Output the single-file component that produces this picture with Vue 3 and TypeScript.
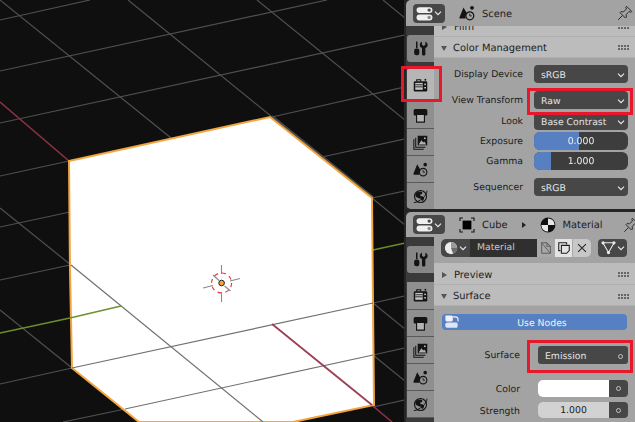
<script setup lang="ts">
type Seg = [number, number, number, number]

const bgLines: Seg[] = [
  [0, 0, 171, 138],
  [128, 0, 372, 198],
  [257, 0, 405, 120],
  [383, 0, 405, 18],
  [0, 208, 71, 265],
  [0, 310, 72, 368],
  [372, 198, 405, 225],
  [373, 303, 405, 329],
  [373, 355, 405, 381],
  [0, 20, 90, 0],
  [0, 71, 327, 0],
  [0, 123, 405, 35],
  [272, 117, 405, 87],
  [0, 176, 69, 161],
  [322, 157, 405, 139],
  [372, 198, 405, 191],
  [0, 227, 70, 212],
  [0, 280, 70, 265],
  [0, 384, 72, 368],
  [373, 303, 405, 296],
  [373, 355, 405, 348],
  [373, 407, 405, 400],
  [63, 422, 125, 409],
]
const bgRed: Seg[] = [
  [0, 102, 69, 161],
  [373, 406, 392, 422],
]
const bgGreen: Seg[] = [
  [0, 333, 70, 318],
  [373, 250, 405, 243],
]
const cubeLines: Seg[] = [
  [71, 265, 263, 422],
  [72, 368, 373, 303],
  [125, 409, 373, 355],
]

const cubeEdge = '69,161 270,117 372,198 373,303 374,405 293,422 139,422 72,368 70,270'
const tabs = ['i-render', 'i-output', 'i-image', 'i-scene', 'i-world']
</script>

<template>
  <div class="screen">
    <!-- icon sheet -->
    <svg class="defs" width="0" height="0" aria-hidden="true">
      <symbol id="i-editor" viewBox="0 0 16 16">
        <rect x="0.5" y="2" width="15" height="5.6" rx="2.8" fill="#f0f0f0" />
        <circle cx="12.4" cy="4.8" r="1.6" fill="#4a4a4a" />
        <rect x="0.5" y="9" width="15" height="5.6" rx="2.8" fill="#f0f0f0" />
        <circle cx="12.4" cy="11.8" r="1.6" fill="#8a8a8a" />
      </symbol>
      <symbol id="i-scene" viewBox="0 0 16 16">
        <path d="M4.5 2.5 L8 8.5 A6 6 0 0 0 6.5 13.5 H1 C0.4 13.5 0.3 12.8 0.6 12 Z" fill="#141414" />
        <circle cx="13" cy="2.8" r="1.9" fill="#141414" />
        <circle cx="10.8" cy="10.8" r="4" fill="none" stroke="#141414" stroke-width="1.2" />
        <path d="M10.8 8.6 V10.9 H12.8" fill="none" stroke="#141414" stroke-width="0.9" />
      </symbol>
      <symbol id="i-pin" viewBox="0 0 16 16">
        <path d="M9.5 1.2 L14.8 6.5 L13.4 7.2 L12 6.4 L9.2 9.6 L9.4 12 L8.4 13 L3 7.6 L4 6.6 L6.4 6.8 L9.6 4 L8.8 2.6 Z M5.4 10.6 L1.2 14.8" fill="none" stroke="#2a2a2a" stroke-width="1" stroke-linejoin="round" />
      </symbol>
      <symbol id="i-tool" viewBox="0 0 16 16">
        <rect x="3.2" y="0.6" width="1.6" height="7" fill="#141414" />
        <rect x="1.2" y="8" width="5.6" height="7.2" rx="2.4" fill="#141414" />
        <path d="M9.6 0.8 V4 L11.4 5.2 L13.2 4 V0.8 C14.8 1.4 15.6 2.8 15.6 4.2 C15.6 5.8 14.6 7 13.2 7.5 V14 C13.2 14.9 12.4 15.4 11.4 15.4 C10.4 15.4 9.6 14.9 9.6 14 V7.5 C8.2 7 7.2 5.8 7.2 4.2 C7.2 2.8 8 1.4 9.6 0.8 Z" fill="#141414" />
      </symbol>
      <symbol id="i-render" viewBox="0 0 16 16">
        <path d="M4 3.6 V1.8 H8.2 V3.6" fill="none" stroke="#141414" stroke-width="1.2" />
        <circle cx="13.2" cy="1.9" r="1" fill="#141414" />
        <rect x="0.8" y="3.4" width="14.4" height="11" rx="1.4" fill="#141414" />
        <rect x="2.4" y="5.2" width="8" height="7.4" fill="#c4c4c4" />
        <path d="M2.4 7.2 H10.4 M2.4 9.4 H10.4" stroke="#141414" stroke-width="0.9" />
        <rect x="12" y="6" width="1.8" height="1.6" fill="#c4c4c4" />
        <rect x="12" y="9.6" width="1.8" height="1.6" fill="#c4c4c4" />
      </symbol>
      <symbol id="i-output" viewBox="0 0 16 16">
        <path d="M2.5 1 H13.5 C14.6 1 15.3 1.8 15.3 3 V6.6 C15.3 7.6 14.8 8 14 8 H2 C1.2 8 0.7 7.6 0.7 6.6 V3 C0.7 1.8 1.4 1 2.5 1 Z" fill="#141414" />
        <path d="M3.8 7.5 V15 H12.2 V7.5" fill="#b4b4b4" stroke="#141414" stroke-width="1.2" />
      </symbol>
      <symbol id="i-image" viewBox="0 0 16 16">
        <path d="M0.9 4.5 V15.1 H11.5 M2.9 2.8 V13.1 H13.2" fill="none" stroke="#141414" stroke-width="1.1" />
        <rect x="5" y="0.8" width="10.2" height="10.2" fill="#141414" />
        <path d="M6 10 L9 5.6 L10.8 8 L12 6.8 L14.2 10 Z" fill="#b0b0b0" />
        <circle cx="12.6" cy="3.4" r="1" fill="#b0b0b0" />
      </symbol>
      <symbol id="i-world" viewBox="0 0 16 16">
        <circle cx="8" cy="8" r="6.4" fill="none" stroke="#141414" stroke-width="1.2" />
        <path d="M4 3.8 C6 2.4 9 2.4 10 3.6 C10.4 5 8.6 5.4 7.6 6.2 C7 7.4 8.6 7.6 10.6 8 C12.6 8.8 12 11 10.6 12.4 C9.4 13 8.6 11.6 8.2 10.2 C6.6 9.8 4.4 9.6 2.6 7.6 C2.4 6 3 4.8 4 3.8 Z" fill="#141414" />
        <path d="M0.8 14.2 C2.4 15 5 13.6 9 11 C12.2 8.8 15.4 4 14.8 1.6" fill="none" stroke="#141414" stroke-width="1" />
      </symbol>
      <symbol id="i-object" viewBox="0 0 16 16">
        <path d="M1 4 V1 H4 M12 1 H15 V4 M15 12 V15 H12 M4 15 H1 V12" fill="none" stroke="#141414" stroke-width="1.1" />
        <rect x="3.6" y="3.6" width="8.8" height="8.8" fill="#000" />
      </symbol>
      <symbol id="i-material" viewBox="0 0 16 16">
        <circle cx="8" cy="8" r="7.4" fill="#111" />
        <path d="M8 1.4 A6.6 6.6 0 0 1 14.6 8 H8 Z" fill="#e8e8e8" />
        <path d="M8 8 H1.4 A6.6 6.6 0 0 0 8 14.6 Z" fill="#e8e8e8" />
      </symbol>
      <symbol id="i-ball" viewBox="0 0 16 16">
        <circle cx="8" cy="8" r="7" fill="#ececec" />
        <path d="M8 1 A7 7 0 0 1 15 8 H8 Z" fill="#9a9a9a" />
        <path d="M8 8 H15 A7 7 0 0 1 10.5 14.5 Z" fill="#6c6c6c" />
      </symbol>
      <symbol id="i-nodes" viewBox="0 0 16 16">
        <path d="M2 3 H14 L8 13.4 Z" fill="none" stroke="#ececec" stroke-width="1.1" />
        <circle cx="2.2" cy="3" r="1.7" fill="#ececec" />
        <circle cx="13.8" cy="3" r="1.7" fill="#ececec" />
        <circle cx="8" cy="13.4" r="1.7" fill="#ececec" />
      </symbol>
      <symbol id="i-chevron" viewBox="0 0 8 8">
        <path d="M1 2.6 L4 5.6 L7 2.6" fill="none" stroke="#e8e8e8" stroke-width="1.2" />
      </symbol>
      <symbol id="i-fake" viewBox="0 0 16 16">
        <path d="M3 2 H9 L13 6 V14 H3 Z M3 2 L13 14 M9 2 V6 H13" fill="none" stroke="#555" stroke-width="1" />
      </symbol>
      <symbol id="i-copy" viewBox="0 0 16 16">
        <path d="M4 11 H2 V2 H11 V4" fill="none" stroke="#1c1c1c" stroke-width="1.2" />
        <path d="M5 5 H14 V11 L11 14 H5 Z" fill="none" stroke="#1c1c1c" stroke-width="1.2" />
      </symbol>
      <symbol id="i-close" viewBox="0 0 16 16">
        <path d="M3.5 3.5 L12.5 12.5 M12.5 3.5 L3.5 12.5" fill="none" stroke="#2a2a2a" stroke-width="1.3" />
      </symbol>
      <symbol id="i-nodetree" viewBox="0 0 16 16">
        <path d="M1.5 1.5 H8 C9.4 1.5 9.4 3 9.4 4 V6.5 C9.4 8 8 8 7 8 H4 C2.5 8 1.5 7.5 1.5 6 Z" fill="#f2f2f2" />
        <path d="M5 9 H13 C14.2 9 14.5 10 14.5 11 V13 C14.5 14.2 13.6 14.6 12.6 14.6 H3 C1.8 14.6 1.4 13.6 1.4 12.6 V11 C1.4 9.6 3 9 5 9 Z" fill="#dfe6f3" />
        <path d="M9.4 3 H12 C14.4 3 15 4.6 15 6 V8" fill="none" stroke="#f2f2f2" stroke-width="1.2" />
      </symbol>
    </svg>

    <!-- 3D viewport -->
    <svg class="viewport" width="404" height="422" viewBox="0 0 404 422">
      <line v-for="(l, i) in bgLines" :key="'g' + i" :x1="l[0]" :y1="l[1]" :x2="l[2]" :y2="l[3]" stroke="#505050" stroke-width="1.2" />
      <line v-for="(l, i) in bgRed" :key="'r' + i" :x1="l[0]" :y1="l[1]" :x2="l[2]" :y2="l[3]" stroke="#8c3243" stroke-width="1.6" />
      <line v-for="(l, i) in bgGreen" :key="'v' + i" :x1="l[0]" :y1="l[1]" :x2="l[2]" :y2="l[3]" stroke="#6b8f2b" stroke-width="1.6" />
      <line x1="272" y1="116" x2="373" y2="197" stroke="#4a4a4a" stroke-width="2" />
      <polygon :points="cubeEdge" fill="#fff" stroke="#f3a63f" stroke-width="2" />
      <line v-for="(l, i) in cubeLines" :key="'c' + i" :x1="l[0]" :y1="l[1]" :x2="l[2]" :y2="l[3]" stroke="#707070" stroke-width="1.2" />
      <line x1="70" y1="318" x2="121" y2="306" stroke="#6d9130" stroke-width="1.6" />
      <line x1="272" y1="324" x2="372" y2="405" stroke="#9b4053" stroke-width="1.8" />
      <!-- 3D cursor -->
      <circle cx="221.6" cy="283" r="10" fill="none" stroke="#f03838" stroke-width="1.2" stroke-dasharray="4 3.85" />
      <path d="M221.5 265 V274 M221.5 292 V302 M203 288 L213 285.5 M230 281 L240 278.5 M213 275 L219 280.5 M224.5 286 L230.5 291" stroke="#8a8a8a" stroke-width="1.1" fill="none" />
      <circle cx="221.6" cy="283" r="2.8" fill="#f5a63b" stroke="#222" stroke-width="1" />
    </svg>

    <div class="editors">
      <!-- Scene: render properties -->
      <section class="editor top">
        <header class="bar">
          <button class="type-btn">
            <svg class="ico"><use href="#i-editor" /></svg>
            <svg class="chev"><use href="#i-chevron" /></svg>
          </button>
          <svg class="ico crumb-ico"><use href="#i-scene" /></svg>
          <span class="crumb">Scene</span>
          <svg class="ico pin"><use href="#i-pin" /></svg>
        </header>
        <div class="body">
          <nav class="tabs">
            <div class="tab tool"><svg class="ico"><use href="#i-tool" /></svg></div>
            <div
              v-for="(t, i) in tabs"
              :key="t"
              class="tab"
              :class="{ active: i === 0 }"
            >
              <svg class="ico"><use :href="'#' + t" /></svg>
            </div>
          </nav>
          <div class="main">
            <div class="head film">
              <span class="tri right"></span>Film<span class="grip"></span>
            </div>
            <div class="head cm">
              <span class="tri"></span>Color Management<span class="grip"></span>
            </div>
            <div class="rows">
              <div class="row">
                <label>Display Device</label>
                <div class="select">sRGB<svg class="chev"><use href="#i-chevron" /></svg></div>
              </div>
              <div class="row far">
                <label>View Transform</label>
                <div class="select">Raw<svg class="chev"><use href="#i-chevron" /></svg></div>
              </div>
              <div class="row near">
                <label>Look</label>
                <div class="select">Base Contrast<svg class="chev"><use href="#i-chevron" /></svg></div>
              </div>
              <div class="row close">
                <label>Exposure</label>
                <div class="slider"><i :style="{ width: '48%' }"></i><span>0.000</span></div>
              </div>
              <div class="row close">
                <label>Gamma</label>
                <div class="slider"><i :style="{ width: '18%' }"></i><span>1.000</span></div>
              </div>
              <div class="row far">
                <label>Sequencer</label>
                <div class="select">sRGB<svg class="chev"><use href="#i-chevron" /></svg></div>
              </div>
            </div>
          </div>
        </div>
      </section>

      <!-- Cube: material properties -->
      <section class="editor bottom">
        <header class="bar">
          <button class="type-btn">
            <svg class="ico"><use href="#i-editor" /></svg>
            <svg class="chev"><use href="#i-chevron" /></svg>
          </button>
          <svg class="ico crumb-ico"><use href="#i-object" /></svg>
          <span class="crumb">Cube</span>
          <span class="sep-tri"></span>
          <svg class="ico mat-ico"><use href="#i-material" /></svg>
          <span class="crumb">Material</span>
          <svg class="ico pin"><use href="#i-pin" /></svg>
        </header>
        <div class="body">
          <nav class="tabs">
            <div class="tab tool"><svg class="ico"><use href="#i-tool" /></svg></div>
            <div v-for="t in tabs" :key="t" class="tab">
              <svg class="ico"><use :href="'#' + t" /></svg>
            </div>
          </nav>
          <div class="main">
            <div class="slot-row">
              <button class="mat-btn">
                <svg class="ico"><use href="#i-ball" /></svg>
                <svg class="chev"><use href="#i-chevron" /></svg>
              </button>
              <div class="mat-name">Material</div>
              <button class="mini off"><svg class="ico sm"><use href="#i-fake" /></svg></button>
              <button class="mini on"><svg class="ico sm"><use href="#i-copy" /></svg></button>
              <button class="mini"><svg class="ico sm"><use href="#i-close" /></svg></button>
              <button class="node-btn">
                <svg class="ico"><use href="#i-nodes" /></svg>
                <svg class="chev"><use href="#i-chevron" /></svg>
              </button>
            </div>
            <div class="head preview">
              <span class="tri right"></span>Preview<span class="grip"></span>
            </div>
            <div class="head surface">
              <span class="tri"></span>Surface<span class="grip"></span>
            </div>
            <div class="rows lower">
              <button class="use-nodes">
                <svg class="ico nodes"><use href="#i-nodetree" /></svg>
                Use Nodes
              </button>
              <div class="row surf">
                <label>Surface</label>
                <div class="select emission">Emission<span class="socket"></span></div>
              </div>
              <div class="row color">
                <label>Color</label>
                <div class="swatch"></div>
                <div class="sock-btn"><span class="socket"></span></div>
              </div>
              <div class="row strength">
                <label>Strength</label>
                <div class="number">1.000</div>
                <div class="sock-btn"><span class="socket"></span></div>
              </div>
            </div>
          </div>
        </div>
      </section>
    </div>

    <!-- red annotation boxes -->
    <div class="mark m-tab"></div>
    <div class="mark m-raw"></div>
    <div class="mark m-emission"></div>
  </div>
</template>

<style>
html,
body {
  margin: 0;
  background: #1f1f1f;
  overflow: hidden;
}
</style>

<style scoped>
.screen {
  position: relative;
  display: flex;
  width: 635px;
  height: 422px;
  overflow: hidden;
  background: #262626;
  font-family: 'DejaVu Sans', sans-serif;
  font-size: 9.3px;
  color: #1c1c1c;
  text-rendering: geometricPrecision;
}

.defs {
  position: absolute;
}

.viewport {
  flex: none;
  display: block;
  background: #0f0f0f;
  filter: blur(0.25px);
}

.ico {
  display: block;
  width: 16px;
  height: 16px;
  flex: none;
}

.ico.sm {
  width: 14px;
  height: 14px;
}

.chev {
  display: block;
  width: 8px;
  height: 8px;
  flex: none;
}

/* ── Editors ───────────────────────────────────────────── */
.editors {
  flex: 1;
  display: flex;
  flex-direction: column;
  gap: 3px;
  padding-left: 2px;
  min-width: 0;
  filter: blur(0.3px);
}

.editor {
  display: flex;
  flex-direction: column;
  overflow: hidden;
  background: #3a3a3a;
  border-radius: 5px 0 0 5px;
}

.editor.top {
  height: 209px;
}

.editor.bottom {
  height: 210px;
  border-radius: 5px 0 0 0;
}

.bar {
  flex: none;
  display: flex;
  align-items: center;
  height: 26px;
  padding-left: 7px;
  background: #a3a3a3;
}

.bottom .bar {
  height: 25px;
}

.type-btn,
.mat-btn,
.node-btn {
  display: flex;
  align-items: center;
  justify-content: center;
  gap: 1px;
  padding: 0;
  border: 0;
  background: #474747;
}

.type-btn {
  width: 32px;
  height: 19px;
  border-radius: 4px;
  margin-right: 14px;
}

.type-btn .ico {
  width: 17px;
  height: 17px;
}

.crumb {
  margin-left: 7px;
  padding-top: 2px;
  font-size: 9.9px;
}

.mat-ico {
  margin-left: 14px;
}

.sep-tri {
  width: 0;
  height: 0;
  margin-left: 14px;
  border-left: 4px solid #222;
  border-top: 3.5px solid transparent;
  border-bottom: 3.5px solid transparent;
}

.pin {
  margin-left: auto;
  margin-right: 2px;
}

.bottom .pin {
  margin-right: -4px;
}

.body {
  flex: 1;
  display: flex;
  min-height: 0;
}

/* ── Tabs ──────────────────────────────────────────────── */
.tabs {
  flex: none;
  width: 28px;
  display: flex;
  flex-direction: column;
  padding-top: 9px;
  background: #3a3a3a;
}

.tab {
  flex: none;
  height: 27px;
  margin-left: 1px;
  display: flex;
  align-items: center;
  justify-content: center;
  background: #8f8f8f;
  border-bottom: 1px solid #5a5a5a;
  box-sizing: border-box;
}

.tab .ico {
  width: 15px;
  height: 15px;
}

.tab.tool {
  margin-bottom: 6px;
  border-bottom: 0;
  border-radius: 3px 0 0 3px;
  background: #868686;
}

.bottom .tab.tool {
  margin-bottom: 9px;
}

.top .tab.active {
  height: 34px;
  border-bottom: 0;
  background: #b6b6b6;
  border-radius: 3px 0 0 3px;
}

.bottom .tab:nth-child(2) {
  height: 28px;
}

.main {
  flex: 1;
  min-width: 0;
  background: #a3a3a3;
  overflow: hidden;
}

/* ── Sub panels ────────────────────────────────────────── */
.head {
  display: flex;
  align-items: center;
  height: 21px;
  padding: 2px 6px 0 7px;
  font-size: 9.9px;
  background: #bcbcbc;
  border-bottom: 1px solid #b0b0b0;
  box-sizing: border-box;
}

.head.film {
  margin-top: -10px;
}

.head.preview {
  height: 22px;
  padding-top: 3px;
}

.head.surface {
  padding-top: 3px;
}

.tri {
  width: 0;
  height: 0;
  margin-right: 6px;
  border-top: 5px solid #555;
  border-left: 3px solid transparent;
  border-right: 3px solid transparent;
}

.tri.right {
  margin-left: 1px;
  margin-right: 7px;
  border-left: 5px solid #555;
  border-right: 0;
  border-top: 3px solid transparent;
  border-bottom: 3px solid transparent;
}

.grip {
  width: 11px;
  height: 6px;
  margin-left: auto;
  background-image: radial-gradient(circle at 1px 1px, #666 0.9px, transparent 1px);
  background-size: 3px 3px;
}

/* ── Property rows ─────────────────────────────────────── */
.rows {
  padding: 7px 7px 0 0;
}

.rows.lower {
  padding-top: 8px;
}

.row {
  display: flex;
  align-items: stretch;
  height: 18px;
}

.row.far {
  margin-top: 8px;
}

.row.near {
  margin-top: 3px;
}

.row.close {
  margin-top: 2px;
}

.row label {
  width: 89px;
  margin-right: 11px;
  flex: none;
  text-align: right;
  line-height: 20px;
  white-space: nowrap;
}

.select {
  flex: 1;
  display: flex;
  align-items: center;
  justify-content: space-between;
  padding: 2px 3px 0 7px;
  border-radius: 4px;
  background: #474747;
  color: #e4e4e4;
}

.slider {
  position: relative;
  flex: 1;
  overflow: hidden;
  border-radius: 6px;
  background: #3d3d3d;
  color: #f0f0f0;
  text-align: center;
  line-height: 20px;
}

.slider i {
  position: absolute;
  top: 0;
  bottom: 0;
  left: 0;
  background: #5680c2;
}

.slider span {
  position: relative;
}

/* ── Material slot ─────────────────────────────────────── */
.slot-row {
  display: flex;
  align-items: center;
  height: 26px;
  padding-left: 7px;
  box-sizing: border-box;
  padding-bottom: 6px;
  padding-top: 1px;
}

.mat-btn {
  width: 29px;
  height: 18px;
  border-radius: 5px 0 0 5px;
}

.mat-btn .ico {
  width: 14px;
  height: 14px;
}

.mat-name {
  width: 67px;
  height: 18px;
  padding-left: 7px;
  box-sizing: border-box;
  background: #2f2f2f;
  color: #c8c8c8;
  line-height: 18px;
}

.mini {
  display: flex;
  align-items: center;
  justify-content: center;
  width: 18px;
  height: 18px;
  padding: 0;
  border: 0;
  border-right: 1px solid #a8a8a8;
  background: #c7c7c7;
}

.mini.off {
  background: #a8a8a8;
}

.mini.on {
  background: #e4e4e4;
}

.mini:nth-child(5) {
  border-right: 0;
  border-radius: 0 5px 5px 0;
}

.node-btn {
  width: 29px;
  height: 18px;
  margin-left: 7px;
  border-radius: 4px;
}

.node-btn .ico {
  width: 15px;
  height: 15px;
}

.use-nodes {
  position: relative;
  display: block;
  width: 185px;
  height: 16px;
  margin-left: 8px;
  padding: 2px 0 0 15px;
  border: 0;
  border-radius: 4px;
  background: #5680c2;
  color: #f4f4f4;
  font-family: inherit;
  font-size: 9.3px;
  text-rendering: inherit;
}

.ico.nodes {
  position: absolute;
  left: 2px;
  top: 0;
  width: 15px;
  height: 15px;
}

.row.surf {
  margin-top: 16px;
}

.row.color {
  height: 17px;
  margin-top: 16px;
}

.row.strength {
  height: 16px;
  margin-top: 5px;
}

.row.surf label,
.row.color label,
.row.strength label {
  width: 86px;
  margin-right: 18px;
}

.row.color label,
.row.strength label {
  line-height: 19px;
}

.emission {
  padding-right: 5px;
  border-radius: 3px;
}

.swatch,
.number {
  flex: 1;
  border-radius: 5px 0 0 5px;
}

.swatch {
  background: #fff;
}

.number {
  background: #d2d2d2;
  text-align: center;
  line-height: 18px;
  color: #1c1c1c;
}

.sock-btn {
  flex: none;
  width: 19px;
  display: flex;
  align-items: center;
  justify-content: center;
  background: #474747;
  border-radius: 0 4px 4px 0;
}

.socket {
  display: block;
  width: 3px;
  height: 3px;
  border: 1.2px solid #c4c4c4;
  border-radius: 50%;
}

/* ── Annotations ───────────────────────────────────────── */
.mark {
  position: absolute;
  border: 3px solid #e8182c;
  box-sizing: border-box;
  pointer-events: none;
}

.m-tab {
  left: 401px;
  top: 66px;
  width: 41px;
  height: 36px;
}

.m-raw {
  left: 527px;
  top: 88px;
  width: 106px;
  height: 27px;
}

.m-emission {
  left: 527px;
  top: 340px;
  width: 106px;
  height: 33px;
}
</style>
